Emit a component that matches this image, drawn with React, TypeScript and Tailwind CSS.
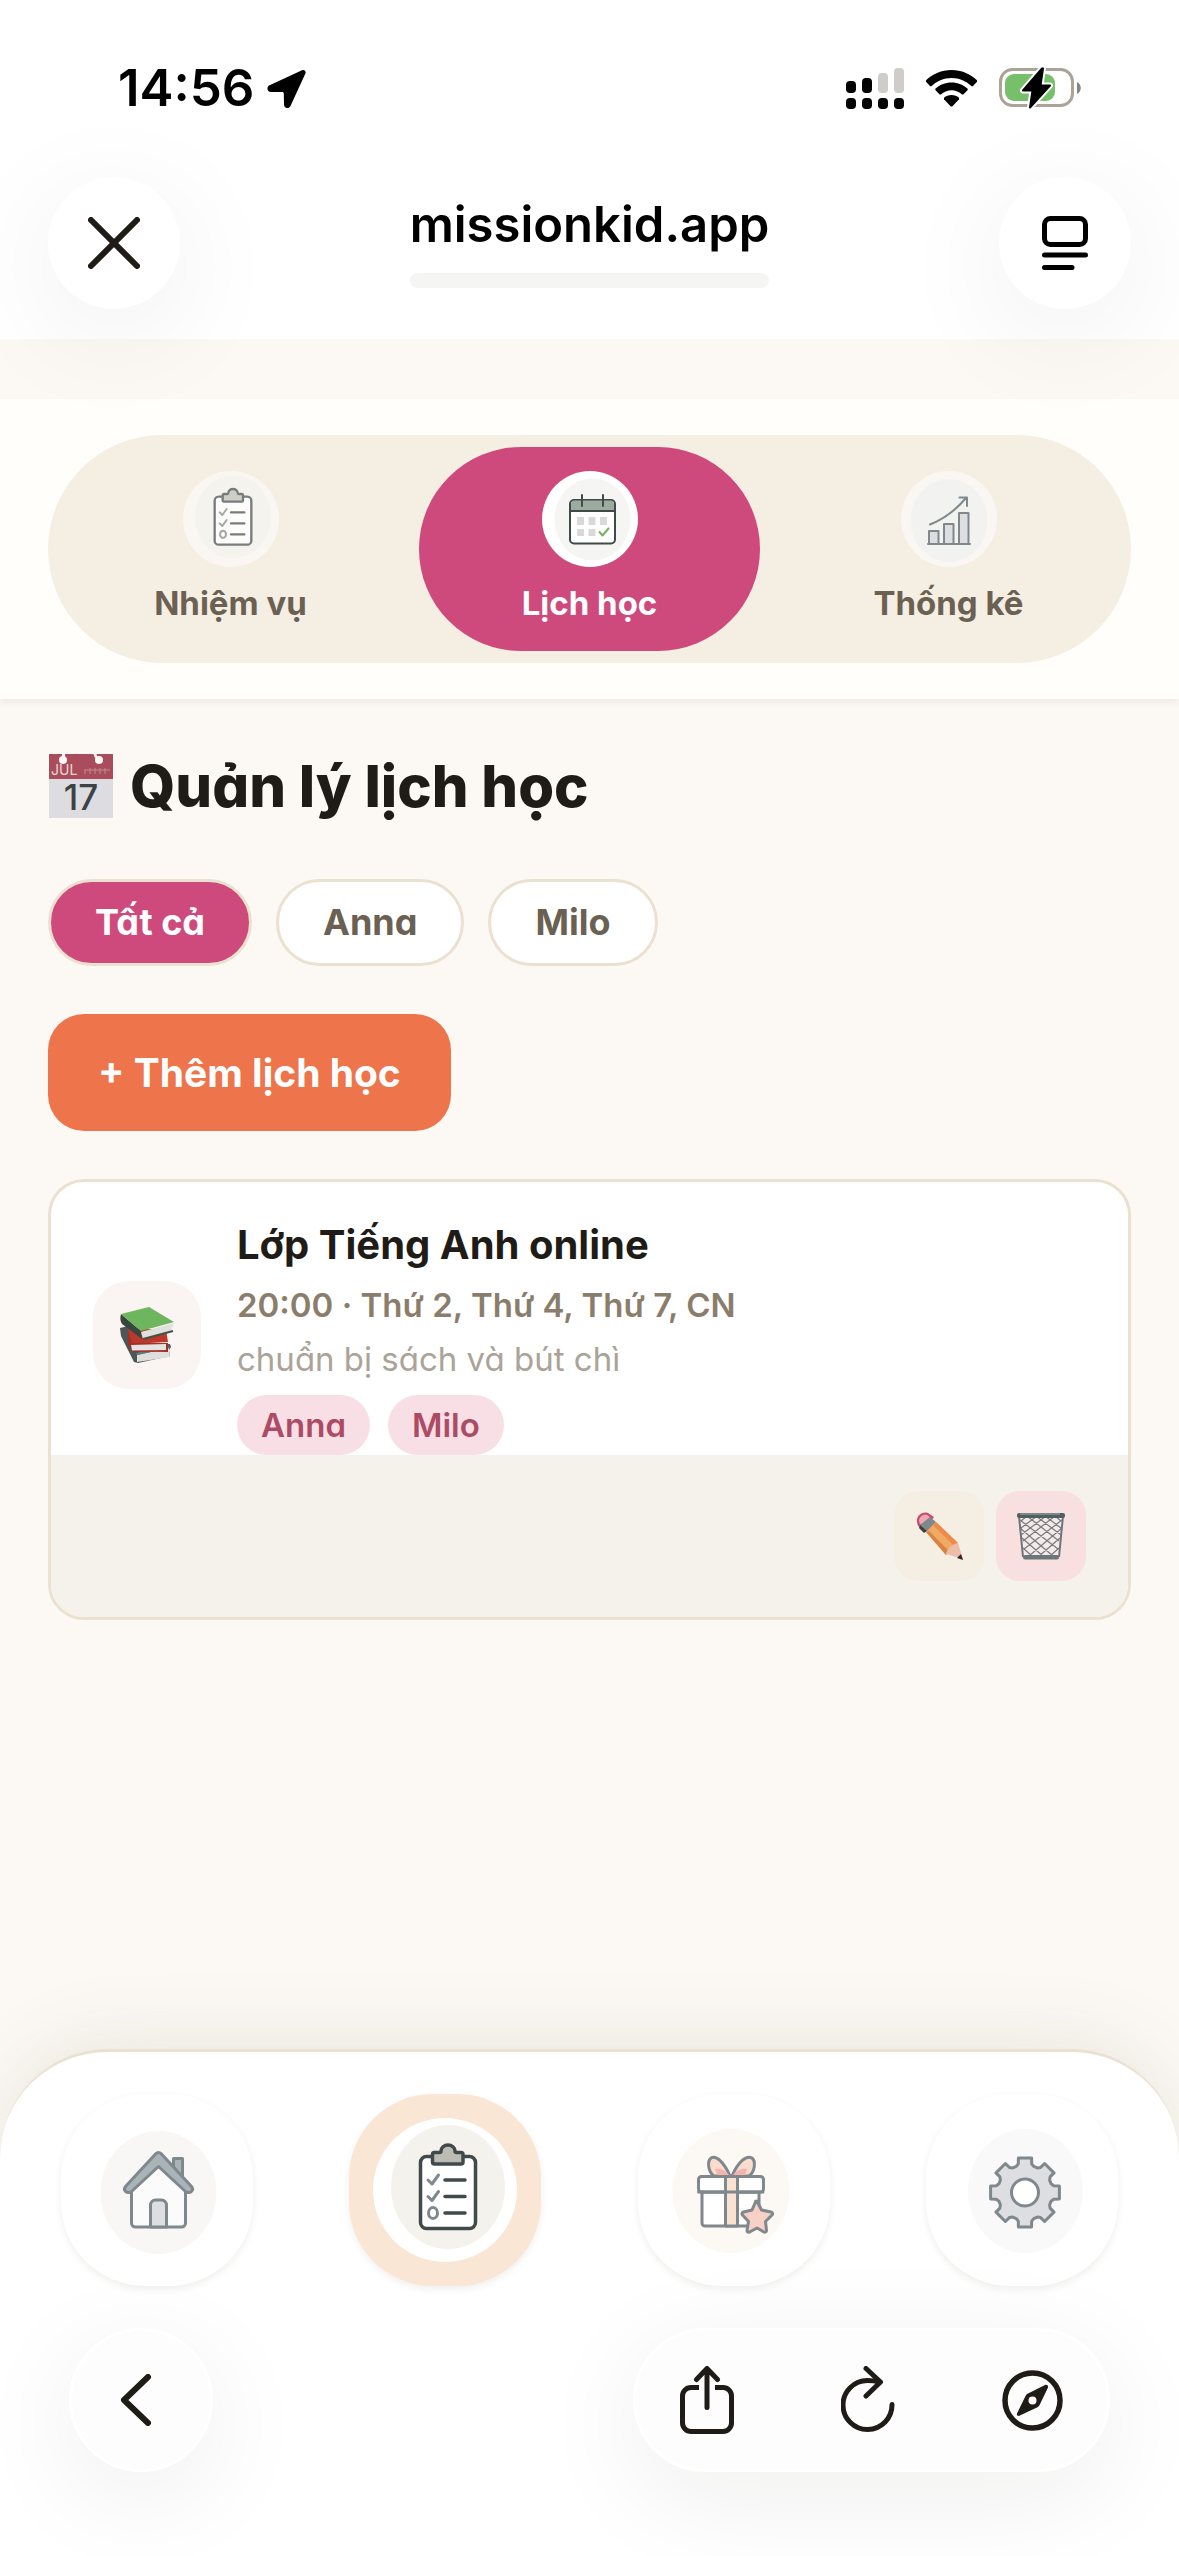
import { useState } from 'react';
import type { ReactNode } from 'react';

/* ---------- Status bar icons ---------- */

function LocationArrow() {
  return (
    <svg viewBox="0 0 39 39" className="h-[39px] w-[39px]" aria-hidden="true">
      <path d="M35 1.2 2.6 16.2C-.8 17.8 0 23 4 23h11.200c1 0 1.600.6 1.600 1.600L17 35.600c0 4 5 4.800 6.600 1.200L38.400 4.400C39.400 2 37.200.2 35 1.200Z" />
    </svg>
  );
}

function SignalIcon() {
  const bars = [
    { x: 0, y: 13, fill: '#000' },
    { x: 16, y: 10, fill: '#000' },
    { x: 32, y: 5, fill: '#cfcdc9' },
    { x: 48, y: 0, fill: '#cfcdc9' },
  ];
  return (
    <svg viewBox="0 0 58 41" className="h-[41px] w-[58px]" aria-hidden="true">
      {bars.map((b) => (
        <g key={b.x}>
          <rect x={b.x} y={b.y} width="10" height={25 - b.y} rx="4" fill={b.fill} />
          <rect x={b.x} y="30" width="10" height="11" rx="4" />
        </g>
      ))}
    </svg>
  );
}

function WifiIcon() {
  return (
    <svg viewBox="0 0 51 37" className="h-[37px] w-[51px]" aria-hidden="true">
      <path d="M25.500 0C15.600 0 6.700 3.800 0 10.300l-.1 1.400 4.300 4.500h1.200C10.600 11.300 17.600 8 25.500 8s14.900 3.300 20.100 8.200h1.200l4.300-4.500-.1-1.400C44.300 3.800 35.400 0 25.500 0Z" />
      <path d="M25.500 12.500c-6.300 0-12 2.400-16.200 6.300v1.300l4.400 4.500h1.200c2.800-2.500 6.500-4.300 10.600-4.300s7.800 1.800 10.600 4.300h1.200l4.400-4.500v-1.300c-4.200-3.900-9.900-6.300-16.200-6.300Z" />
      <path d="M25.500 25c-2.900 0-5.500 1-7.500 2.700v1.500l6.800 7.300h1.400l6.800-7.300v-1.500C31 26 28.400 25 25.500 25Z" />
    </svg>
  );
}

function BatteryIcon() {
  return (
    <svg viewBox="0 0 83 42" className="h-[42px] w-[83px]" aria-hidden="true">
      <rect x="1.500" y="2.500" width="72" height="36" rx="12" fill="none" stroke="#aba398" strokeWidth="3" />
      <path d="M78 15c5 2 5 10 0 12Z" fill="#7f888c" />
      <rect x="6" y="7" width="50" height="27" rx="9" fill="#78bf6b" />
      <path
        d="M43 1.500 24 23.500h9.500L31 40.500 51 18.500H41.500L44 1.500Z"
        stroke="#fff"
        strokeWidth="6"
        strokeLinejoin="round"
      />
      <path d="M43 1.500 24 23.500h9.500L31 40.500 51 18.500H41.500L44 1.500Z" stroke="#000" strokeWidth="2" strokeLinejoin="round" />
    </svg>
  );
}

/* ---------- Browser icons ---------- */

function CloseIcon() {
  return (
    <svg viewBox="0 0 52 52" className="h-[52px] w-[52px]" fill="none" stroke="#1f1c18" strokeWidth="6" strokeLinecap="round" aria-hidden="true">
      <path d="m3 3 46 46M49 3 3 49" />
    </svg>
  );
}

function ReaderIcon() {
  return (
    <svg viewBox="0 0 46 54" className="h-[54px] w-[46px]" fill="none" stroke="#000" strokeWidth="5" strokeLinecap="round" aria-hidden="true">
      <rect x="2.500" y="2.500" width="41" height="26" rx="6" />
      <path d="M2.500 39h41M2.500 51.500H30" />
    </svg>
  );
}

function BackIcon() {
  return (
    <svg viewBox="0 0 52 52" className="h-[52px] w-[52px]" fill="none" stroke="#1f1c18" strokeWidth="6" strokeLinecap="round" strokeLinejoin="round" aria-hidden="true">
      <path d="M33 3 9 26l24 23" />
    </svg>
  );
}

function ShareIcon() {
  return (
    <svg viewBox="0 0 54 68" className="h-[68px] w-[54px]" fill="none" stroke="#1f1c18" strokeWidth="5" strokeLinejoin="round" aria-hidden="true">
      <path d="M19 21.500h-8a8.500 8.500 0 0 0-8.500 8.500v27a8.500 8.500 0 0 0 8.500 8.500h32a8.500 8.500 0 0 0 8.500-8.500V30a8.500 8.500 0 0 0-8.500-8.500h-8" />
      <path d="M27 41.500V3M16.500 13.500 27 2.500l10.500 11" strokeLinecap="round" />
    </svg>
  );
}

function ReloadIcon() {
  return (
    <svg viewBox="0 0 54 68" className="h-[68px] w-[54px]" fill="none" stroke="#1f1c18" strokeWidth="5" strokeLinecap="round" strokeLinejoin="round" aria-hidden="true">
      <path d="M51 38.500A24.500 24.500 0 1 1 26.500 14.500c4.500 0 8 .5 12.500 1.500" />
      <path d="m25 2.500 14.500 13.500L25 30" />
    </svg>
  );
}

function CompassIcon() {
  return (
    <svg viewBox="0 0 61 61" className="h-[61px] w-[61px]" aria-hidden="true">
      <circle cx="30.500" cy="30.500" r="27.500" fill="none" stroke="#1f1c18" strokeWidth="5.500" />
      <path d="M43 15 26 23.500c-1.500.8-2 1.400-2.600 2.800L15 43.500c-.6 1.600.7 2.900 2.300 2.300L35 37.500c1.400-.7 2-1.300 2.700-2.700L46 17.500c.7-1.700-1.200-3.300-3-2.500Z" fill="#1f1c18" />
      <circle cx="30.500" cy="30.500" r="4" fill="#fdfdfd" />
    </svg>
  );
}

/* ---------- App icons ---------- */

function ClipboardIcon({ className }: { className: string }) {
  return (
    <svg viewBox="0 0 144 144" className={className} fill="none" strokeLinecap="round" strokeLinejoin="round" aria-hidden="true">
      <ellipse cx="75" cy="69" rx="57" ry="62" fill="#f4f2ec" />
      <rect x="47.500" y="38.500" width="55" height="72" rx="6" fill="#fff" stroke="#414a4b" strokeWidth="3.500" />
      <path d="M61 34.500h5.500a1.500 1.500 0 0 0 1.500-1.500a7 6 0 0 1 14 0a1.500 1.500 0 0 0 1.500 1.500H88a2 2 0 0 1 2 2V44a2 2 0 0 1-2 2H61.500a2 2 0 0 1-2-2v-7.500a2 2 0 0 1 1.500-2Z" fill="#bcbcb4" stroke="#414a4b" strokeWidth="3.500" />
      <path d="M72 62h20M72 78.500h20M72 95h20" stroke="#414a4b" strokeWidth="3.500" />
      <path d="m55 62 4 4 6.500-9M55 78.500l4 4 6.500-9" stroke="#7f888c" strokeWidth="3" />
      <ellipse cx="60" cy="95" rx="4.500" ry="5.500" stroke="#7f888c" strokeWidth="3" />
    </svg>
  );
}

function CalendarIcon() {
  return (
    <svg viewBox="0 0 96 96" className="h-24 w-24" fill="none" strokeLinecap="round" strokeLinejoin="round" aria-hidden="true">
      <ellipse cx="50.500" cy="48.500" rx="38" ry="41" fill="#f5f5f3" />
      <rect x="28" y="29" width="45" height="43.500" rx="4" fill="#fff" stroke="#414a4b" strokeWidth="2" />
      <path d="M29 40V33a3.500 3.500 0 0 1 3.500-3.500h36A3.500 3.500 0 0 1 72 33v7Z" fill="#9dab9f" />
      <path d="M28 40h45M40 24v11M61 24v11" stroke="#414a4b" strokeWidth="2" />
      <path d="M35 46h7v8h-7zM46.500 46h7v8h-7zM58 46h7v8h-7zM35 58h7v7h-7zM46.500 58h7v7h-7z" fill="#d9d9da" />
      <path d="m57.500 61 3 3.500 6-7" stroke="#76b25e" strokeWidth="2" />
    </svg>
  );
}

function ChartIcon() {
  return (
    <svg viewBox="0 0 96 96" className="h-24 w-24" fill="none" stroke="#7f888c" strokeWidth="2" strokeLinecap="round" strokeLinejoin="round" aria-hidden="true">
      <ellipse cx="48" cy="49.500" rx="38.500" ry="41.500" fill="#f2f2f0" stroke="none" />
      <path d="M28 73V60h9.500v13M43 73V53h9.500v20M58 73V42h9.500v31" fill="#dddee1" />
      <path d="M27 73h42M29 53.500C43 48 54 40 65 27M58.500 26.500H66V35" />
    </svg>
  );
}

function HomeIcon() {
  return (
    <svg viewBox="0 0 144 144" className="h-36 w-36" fill="none" stroke="#7f888c" strokeWidth="3" strokeLinecap="round" strokeLinejoin="round" aria-hidden="true">
      <ellipse cx="73.500" cy="74.500" rx="58" ry="61.500" fill="#f8f7f5" stroke="none" />
      <path d="M88.500 52V40.500H97.500V62Z" fill="#a9b4b8" />
      <path d="M46.500 72v33a4 4 0 0 0 4 4h46a4 4 0 0 0 4-4V72L73.500 46Z" fill="#fbfbfb" />
      <path d="M71 35.500 40.500 68.500c-3 4 1 7 5.500 5.500L73.500 48.500 101 74c4.500 1.500 8.500-1.500 5.500-5.500L76 35.500a3.500 3.500 0 0 0-5 0Z" fill="#a9b4b8" />
      <path d="M65.500 109V87a5 5 0 0 1 5-5h6a5 5 0 0 1 5 5v22Z" fill="#dddee1" />
    </svg>
  );
}

function GiftIcon() {
  return (
    <svg viewBox="0 0 144 144" className="h-36 w-36" fill="none" stroke="#7f888c" strokeWidth="3" strokeLinecap="round" strokeLinejoin="round" aria-hidden="true">
      <ellipse cx="69" cy="73" rx="58.500" ry="62" fill="#fcf8f3" stroke="none" />
      <path d="M68 58C62 44 54 37 49 40c-4 3-3 14 3 18ZM70 58c6-14 14-21 20-18 4 3 3 14-3 18Z" fill="#fadccf" />
      <path d="M53 51q8-2 15 7H56ZM85 51q-8-2-15 7h13Z" fill="#f3b5ab" stroke="none" />
      <path d="M40 74h57v31a3 3 0 0 1-3 3H43a3 3 0 0 1-3-3Z" fill="#fff" />
      <rect x="36.500" y="58.500" width="65" height="15.500" rx="3" fill="#fff" />
      <path d="M63.500 58.500h12V108h-12Z" fill="#fae2d3" />
      <path d="M36.500 74H101" />
      <path
        d="m95.500 84 4 8 9.500 2c1.500.5 2 2 1 3l-6.500 6.500 1 9c0 1.500-1.500 2-2.500 1.500L95 110l-7.500 4c-1.500.5-2.500 0-2.500-1.500l1.500-9L80.500 97c-1-1-.5-2.500 1-3l8.500-2 3.500-8a1 1 0 0 1 2 0Z"
        fill="#f9d0c5"
      />
    </svg>
  );
}

// Outline of an eight-tooth cog centred on (75, 74.5)
const gearPath =
  Array.from({ length: 8 }, (_, i) => {
    const base = (i * Math.PI) / 4;
    return [
      [-0.32, 27.5],
      [-0.23, 29.5],
      [-0.19, 35],
      [0.19, 35],
      [0.23, 29.5],
      [0.32, 27.5],
    ]
      .map(([a, r]) => `${(75 + r * Math.sin(base + a)).toFixed(1)} ${(74.5 - r * Math.cos(base + a)).toFixed(1)}`)
      .join('L');
  }).join('L');

function GearIcon() {
  return (
    <svg viewBox="0 0 144 144" className="h-36 w-36" stroke="#7f888c" strokeWidth="3" strokeLinejoin="round" aria-hidden="true">
      <ellipse cx="75.500" cy="73" rx="57.500" ry="62" fill="#f9f9f9" stroke="none" />
      <path d={`M${gearPath}Z`} fill="#dddee2" />
      <circle cx="75" cy="74.500" r="13.500" fill="#fff" />
    </svg>
  );
}

/* ---------- Emoji drawings ---------- */

function CalendarEmoji() {
  return (
    <svg viewBox="0 0 66 66" className="h-[66px] w-[66px] shrink-0" aria-hidden="true">
      <path d="M1 1h64v64H1z" fill="#dcdce1" />
      <path d="M1 1h64v25H1z" fill="#a94d5d" />
      <path d="M14 0h3v6h-3zM45 0h3l2 5h-3z" fill="#fcf9f5" />
      <circle cx="15" cy="7" r="4" fill="#fcf9f5" />
      <circle cx="51" cy="7" r="4" fill="#fcf9f5" />
      <path d="M37 17v4M42 15v6M47 15v6M52 15v6M57 15v6M36 17h26" stroke="#c58a92" strokeWidth="1" />
      <text x="3" y="22" fontSize="14" fontWeight="400" fill="#ecd5d3">JUL</text>
      <text x="33" y="57" fontSize="35" fontWeight="500" textAnchor="middle" fill="#3c4345">17</text>
    </svg>
  );
}

function BooksEmoji() {
  return (
    <svg viewBox="0 0 56 58" className="h-[58px] w-14" strokeLinejoin="round" aria-hidden="true">
      <path d="m1 22 8-2 14 20 28-2 1 3-2 3 1 6-32 7-4-1L2 30Z" fill="#4c5659" />
      <path d="m18 49 32-7 1 9-33 5Z" fill="#dededc" />
      <path d="m17 47 33-7 1 2-33 7Z" fill="#6b7679" />
      <path d="m9 22 38 2 2 12-38 2Z" fill="#b93a2c" />
      <path d="m9 25 4 12h36v9l-36-.500L9 38Z" fill="#a32f25" />
      <path d="m12 39 35-1v6l-34 .5Z" fill="#e6e4e2" />
      <path d="m2 8 20 17 1 8L3 18C1 15 1 11 2 8Z" fill="#38463f" />
      <path d="m22 26 33-9-3 8-28 8Z" fill="#e0e0dd" />
      <path d="M2 8 30 1l25 15-33 9Z" fill="#6eb65d" />
      <path d="m24 33 30-8" stroke="#465148" strokeWidth="2" />
    </svg>
  );
}

function PencilEmoji() {
  return (
    <svg viewBox="0 0 48 48" className="h-12 w-12" aria-hidden="true">
      <path d="M2 10C1 4 7-1 13 1l6 4-10 12-6-3Z" fill="#c94a75" />
      <path d="M4 9c0-4 4-7 8-6l3 2-7 9-3-2Z" fill="#eda9b3" />
      <path d="m15 5 6 5-9 10-7-7Z" fill="#7f888c" />
      <path d="m5 13 7 6-3 2-5-5Z" fill="#3e3f3c" />
      <path d="m21 10 22 21-12 12L11 20Z" fill="#efab62" />
      <path d="m21 10 22 21-4 3L18 13Z" fill="#ee8a4a" />
      <path d="m11 20 3-1 20 20-3 4Z" fill="#d98242" />
      <path d="m43 31 5 16-17-5c1-5 6-10 12-11Z" fill="#edbcab" />
      <path d="m46 42 2 6-6-2Z" fill="#2b2a28" />
    </svg>
  );
}

function BinEmoji() {
  return (
    <svg viewBox="0 0 48 48" className="h-12 w-12" aria-hidden="true">
      <path d="m2 4 4 41h36l4-41Z" fill="#f6eae8" />
      <path
        d="m3 8 38 29M3 16l33 28M5 26l22 19M6 36l10 9M10 4l32 25M19 4l25 19M28 4l16 12M38 4l6 5M45 8 7 37M45 16 12 44M43 26 21 45M42 36l-10 9M38 4 6 29M29 4 4 23M20 4 4 16M10 4 4 9"
        fill="none"
        stroke="#737e81"
        strokeWidth="1.200"
      />
      <path d="m2 4 4 41M46 4l-4 41" stroke="#6d7779" strokeWidth="2" />
      <rect x="0" y="1" width="48" height="5" rx="2" fill="#535e61" />
      <path d="M3 2h40" stroke="#a8b1b3" strokeWidth="1" />
      <rect x="6" y="43" width="36" height="4.500" rx="2" fill="#6d7779" />
    </svg>
  );
}

/* ---------- Page parts ---------- */

function BrowserHeader() {
  return (
    <header className="relative z-10 bg-white pb-[30px] pt-[58px] font-[Inter,sans-serif] text-black [font-feature-settings:normal]">
      <div className="flex h-[60px] items-center justify-between pl-[118px] pr-[97px]">
        <div className="flex items-center gap-3">
          <span className="text-[51px] font-semibold leading-[60px]">14:56</span>
          <LocationArrow />
        </div>
        <div className="flex items-center gap-[22px]">
          <SignalIcon />
          <WifiIcon />
          <BatteryIcon />
        </div>
      </div>
      <div className="mt-[59px] flex items-center justify-between px-12">
        <button aria-label="Đóng" className="flex size-[132px] items-center justify-center rounded-full bg-white shadow-[0_24px_120px_rgba(40,35,20,0.07)]">
          <CloseIcon />
        </button>
        <div className="flex flex-col gap-[18px] pb-1">
          <span className="text-[49px] font-semibold leading-[60px]">missionkid.app</span>
          <div className="h-[15px] rounded-full bg-[#f5f5f3]" />
        </div>
        <button aria-label="Trình đọc" className="flex size-[132px] items-center justify-center rounded-full bg-white shadow-[0_24px_120px_rgba(40,35,20,0.07)]">
          <ReaderIcon />
        </button>
      </div>
    </header>
  );
}

const tabs: { label: string; icon: ReactNode }[] = [
  { label: 'Nhiệm vụ', icon: <ClipboardIcon className="h-24 w-24 opacity-70" /> },
  { label: 'Lịch học', icon: <CalendarIcon /> },
  { label: 'Thống kê', icon: <ChartIcon /> },
];

function SectionTabs() {
  const [active, setActive] = useState('Lịch học');
  return (
    <nav className="mt-[60px] bg-[#fffefb] px-12 py-9 shadow-[0_4px_6px_rgba(70,50,20,0.07)]">
      <div className="grid grid-cols-3 gap-[18px] rounded-full bg-[#f5eee3] p-3">
        {tabs.map((tab) => {
          const isActive = tab.label === active;
          return (
            <button
              key={tab.label}
              onClick={() => setActive(tab.label)}
              className={`flex flex-col items-center gap-3 rounded-full py-6 ${isActive ? 'bg-[#cf4a7c] text-white' : 'text-[#6b6153]'}`}
            >
              <span className={`size-24 rounded-full ${isActive ? 'bg-white' : 'bg-[#faf7f3]'}`}>{tab.icon}</span>
              <span className="text-[33px] font-bold leading-[48px]">{tab.label}</span>
            </button>
          );
        })}
      </div>
    </nav>
  );
}

function ScheduleCard() {
  return (
    <article className="mt-12 overflow-hidden rounded-[36px] border-3 border-[#eae1d1] bg-white">
      <div className="flex items-center gap-9 px-[42px] pt-[33px]">
        <div className="flex size-[108px] shrink-0 items-center justify-center rounded-[36px] bg-[#faf5f2]">
          <BooksEmoji />
        </div>
        <div className="min-w-0">
          <h2 className="text-[40px] font-bold leading-[60px] text-[#1f1c18]">Lớp Tiếng Anh online</h2>
          <p className="mt-1.5 text-[33px] font-semibold leading-[48px] text-[#8b7d6b]">20:00 · Thứ 2, Thứ 4, Thứ 7, CN</p>
          <p className="mt-1.5 text-[33px] leading-[48px] text-[#aba398]">chuẩn bị sách và bút chì</p>
          <div className="mt-3 flex gap-[18px]">
            {['Anna', 'Milo'].map((name) => (
              <span key={name} className="rounded-full bg-[#f8dfe6] px-6 text-[33px] font-semibold leading-[60px] text-[#ad4a64]">
                {name}
              </span>
            ))}
          </div>
        </div>
      </div>
      <div className="flex justify-end gap-3 bg-[#f5f2eb] px-[42px] py-9">
        <button aria-label="Sửa" className="flex size-[90px] items-center justify-center rounded-[24px] bg-[#f5eee3]">
          <PencilEmoji />
        </button>
        <button aria-label="Xóa" className="flex size-[90px] items-center justify-center rounded-[24px] bg-[#f8e0e1]">
          <BinEmoji />
        </button>
      </div>
    </article>
  );
}

const navItems: { label: string; icon: ReactNode; active?: boolean }[] = [
  { label: 'Trang chủ', icon: <HomeIcon /> },
  { label: 'Quản lý', icon: <ClipboardIcon className="h-36 w-36" />, active: true },
  { label: 'Phần thưởng', icon: <GiftIcon /> },
  { label: 'Cài đặt', icon: <GearIcon /> },
];

function BottomBars() {
  return (
    <footer className="mt-auto rounded-t-[108px] border-t-3 border-[#eae1d1] bg-white pb-[84px] pt-[42px] shadow-[0_-12px_72px_rgba(90,75,40,0.1)]">
      <nav className="flex justify-between px-[61px]">
        {navItems.map((item) => (
          <button
            key={item.label}
            aria-label={item.label}
            className={`flex size-48 items-center justify-center rounded-[84px] shadow-[0_3px_7px_rgba(60,50,30,0.08)] ${item.active ? 'bg-[#fae6d5]' : 'bg-white'}`}
          >
            <span className="size-36 rounded-full bg-white">{item.icon}</span>
          </button>
        ))}
      </nav>
      <div className="mt-[42px] flex justify-between px-[69px]">
        <button aria-label="Quay lại" className="flex size-36 items-center justify-center rounded-full border-3 border-white bg-[#fdfdfd] shadow-[0_24px_110px_rgba(40,35,20,0.07)]">
          <BackIcon />
        </button>
        <div className="flex h-36 items-center gap-[107px] rounded-full border-3 border-white bg-[#fdfdfd] px-11 shadow-[0_24px_110px_rgba(40,35,20,0.07)]">
          <button aria-label="Chia sẻ">
            <ShareIcon />
          </button>
          <button aria-label="Tải lại">
            <ReloadIcon />
          </button>
          <button aria-label="Mở trong trình duyệt">
            <CompassIcon />
          </button>
        </div>
      </div>
    </footer>
  );
}

export default function App() {
  const [child, setChild] = useState('Tất cả');
  return (
    <div className="flex min-h-screen flex-col overflow-hidden bg-[#fcf9f5] font-[Inter,'Noto_Sans',sans-serif] [font-feature-settings:'cv11']">
      <BrowserHeader />
      <SectionTabs />
      <main className="px-12 pt-[51px]">
        <h1 className="flex items-center gap-4 text-[58px] font-extrabold leading-[72px] text-[#1f1c18]">
          <CalendarEmoji />
          Quản lý lịch học
        </h1>
        <div className="mt-[57px] flex gap-6">
          {['Tất cả', 'Anna', 'Milo'].map((name) => (
            <button
              key={name}
              onClick={() => setChild(name)}
              className={`rounded-full border-3 border-[#eae1d1] px-11 text-[36px] font-bold leading-[81px] ${
                name === child ? 'bg-[#cf4a7c] text-white' : 'bg-white text-[#6b6153]'
              }`}
            >
              {name}
            </button>
          ))}
        </div>
        <button className="mt-12 rounded-[36px] bg-[#ed744b] px-[50px] text-[39px] font-bold leading-[117px] text-white">+ Thêm lịch học</button>
        <ScheduleCard />
      </main>
      <BottomBars />
    </div>
  );
}
